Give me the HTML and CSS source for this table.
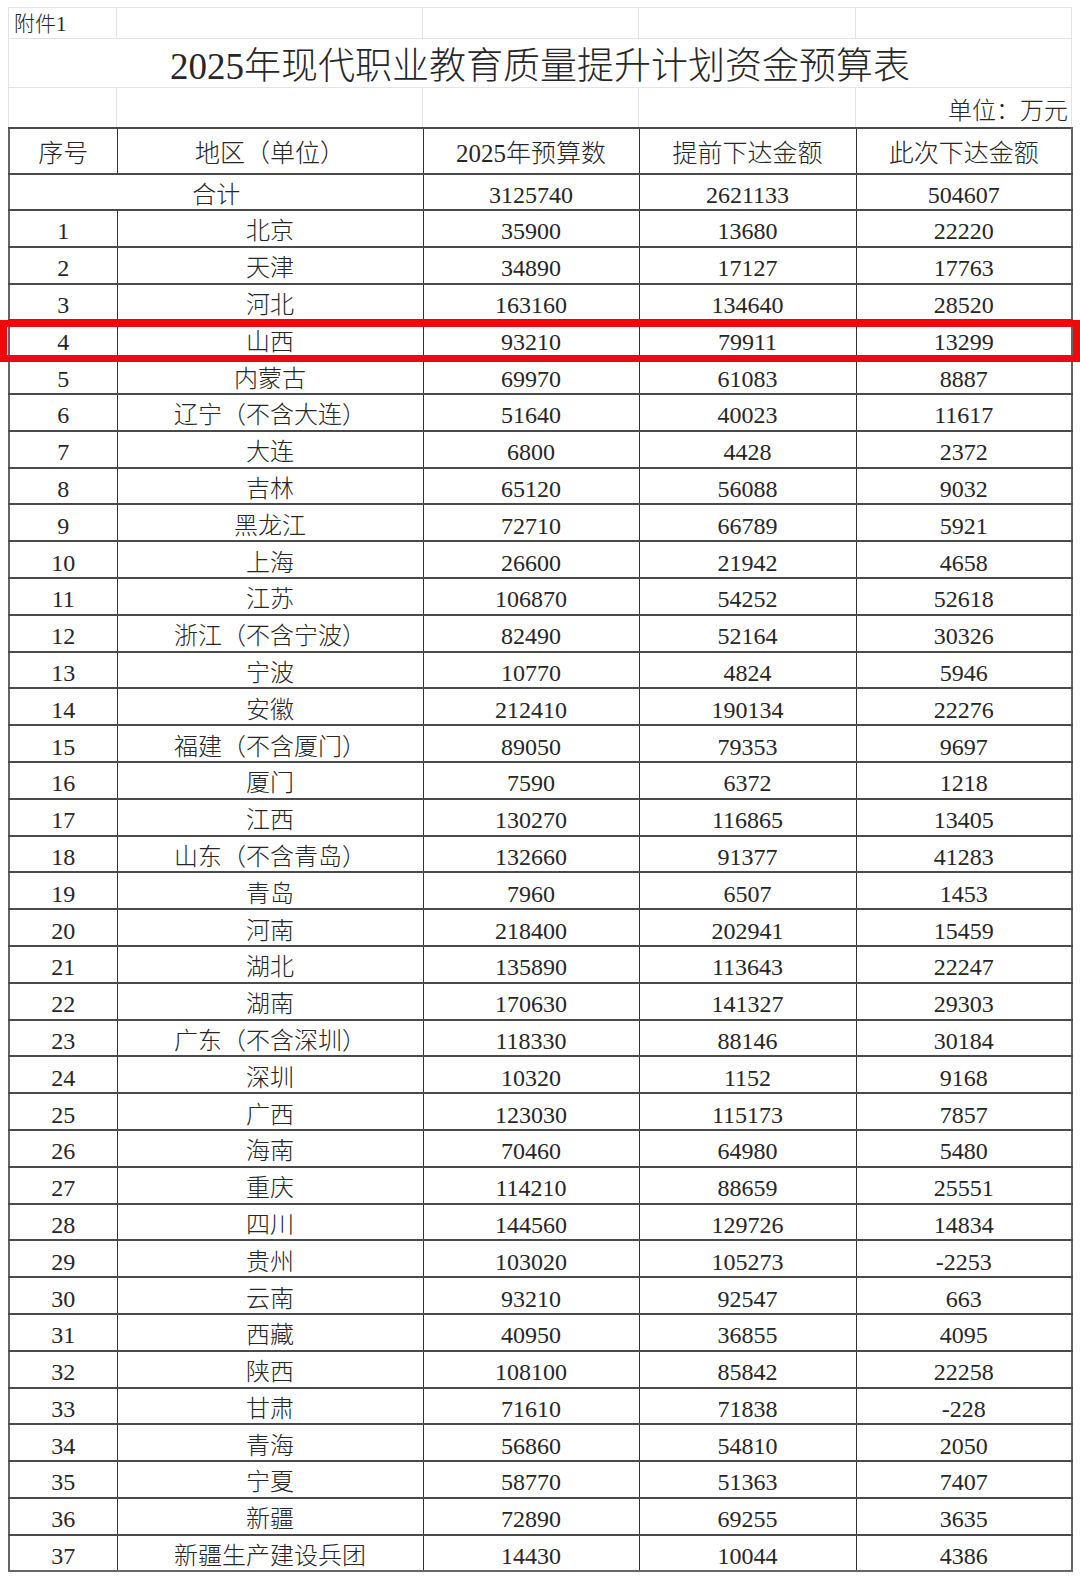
FILE: index.html
```html
<!DOCTYPE html>
<html lang="zh-CN">
<head>
<meta charset="utf-8">
<title>2025年现代职业教育质量提升计划资金预算表</title>
<link rel="stylesheet" href="styles.css">
</head>
<body>
<div class="page">
  <table class="sheet-head">
    <colgroup><col class="c1"><col class="c2"><col class="c3"><col class="c4"><col class="c5"></colgroup>
    <tr class="r-annex"><td class="annex">附件<span class="num">1</span></td><td></td><td></td><td></td><td></td></tr>
    <tr class="r-title"><td colspan="5" class="title"><span class="num">2025</span>年现代职业教育质量提升计划资金预算表</td></tr>
    <tr class="r-unit"><td></td><td></td><td></td><td></td><td class="unit">单位：万元</td></tr>
  </table>
  <table class="budget">
    <colgroup><col class="c1"><col class="c2"><col class="c3"><col class="c4"><col class="c5"></colgroup>
    <thead>
      <tr class="r-head"><th>序号</th><th>地区（单位）</th><th><span class="num">2025</span>年预算数</th><th>提前下达金额</th><th>此次下达金额</th></tr>
    </thead>
    <tbody>
      <tr class="r-total"><td colspan="2">合计</td><td>3125740</td><td>2621133</td><td>504607</td></tr>
      <tr><td>1</td><td>北京</td><td>35900</td><td>13680</td><td>22220</td></tr>
      <tr><td>2</td><td>天津</td><td>34890</td><td>17127</td><td>17763</td></tr>
      <tr><td>3</td><td>河北</td><td>163160</td><td>134640</td><td>28520</td></tr>
      <tr><td>4</td><td>山西</td><td>93210</td><td>79911</td><td>13299</td></tr>
      <tr><td>5</td><td>内蒙古</td><td>69970</td><td>61083</td><td>8887</td></tr>
      <tr><td>6</td><td>辽宁（不含大连）</td><td>51640</td><td>40023</td><td>11617</td></tr>
      <tr><td>7</td><td>大连</td><td>6800</td><td>4428</td><td>2372</td></tr>
      <tr><td>8</td><td>吉林</td><td>65120</td><td>56088</td><td>9032</td></tr>
      <tr><td>9</td><td>黑龙江</td><td>72710</td><td>66789</td><td>5921</td></tr>
      <tr><td>10</td><td>上海</td><td>26600</td><td>21942</td><td>4658</td></tr>
      <tr><td>11</td><td>江苏</td><td>106870</td><td>54252</td><td>52618</td></tr>
      <tr><td>12</td><td>浙江（不含宁波）</td><td>82490</td><td>52164</td><td>30326</td></tr>
      <tr><td>13</td><td>宁波</td><td>10770</td><td>4824</td><td>5946</td></tr>
      <tr><td>14</td><td>安徽</td><td>212410</td><td>190134</td><td>22276</td></tr>
      <tr><td>15</td><td>福建（不含厦门）</td><td>89050</td><td>79353</td><td>9697</td></tr>
      <tr><td>16</td><td>厦门</td><td>7590</td><td>6372</td><td>1218</td></tr>
      <tr><td>17</td><td>江西</td><td>130270</td><td>116865</td><td>13405</td></tr>
      <tr><td>18</td><td>山东（不含青岛）</td><td>132660</td><td>91377</td><td>41283</td></tr>
      <tr><td>19</td><td>青岛</td><td>7960</td><td>6507</td><td>1453</td></tr>
      <tr><td>20</td><td>河南</td><td>218400</td><td>202941</td><td>15459</td></tr>
      <tr><td>21</td><td>湖北</td><td>135890</td><td>113643</td><td>22247</td></tr>
      <tr><td>22</td><td>湖南</td><td>170630</td><td>141327</td><td>29303</td></tr>
      <tr><td>23</td><td>广东（不含深圳）</td><td>118330</td><td>88146</td><td>30184</td></tr>
      <tr><td>24</td><td>深圳</td><td>10320</td><td>1152</td><td>9168</td></tr>
      <tr><td>25</td><td>广西</td><td>123030</td><td>115173</td><td>7857</td></tr>
      <tr><td>26</td><td>海南</td><td>70460</td><td>64980</td><td>5480</td></tr>
      <tr><td>27</td><td>重庆</td><td>114210</td><td>88659</td><td>25551</td></tr>
      <tr><td>28</td><td>四川</td><td>144560</td><td>129726</td><td>14834</td></tr>
      <tr><td>29</td><td>贵州</td><td>103020</td><td>105273</td><td>-2253</td></tr>
      <tr><td>30</td><td>云南</td><td>93210</td><td>92547</td><td>663</td></tr>
      <tr><td>31</td><td>西藏</td><td>40950</td><td>36855</td><td>4095</td></tr>
      <tr><td>32</td><td>陕西</td><td>108100</td><td>85842</td><td>22258</td></tr>
      <tr><td>33</td><td>甘肃</td><td>71610</td><td>71838</td><td>-228</td></tr>
      <tr><td>34</td><td>青海</td><td>56860</td><td>54810</td><td>2050</td></tr>
      <tr><td>35</td><td>宁夏</td><td>58770</td><td>51363</td><td>7407</td></tr>
      <tr><td>36</td><td>新疆</td><td>72890</td><td>69255</td><td>3635</td></tr>
      <tr><td>37</td><td>新疆生产建设兵团</td><td>14430</td><td>10044</td><td>4386</td></tr>
    </tbody>
  </table>
  <div class="highlight"></div>
</div>
</body>
</html>
```

FILE: styles.css
```css
html, body {
  margin: 0;
  padding: 0;
  background: #ffffff;
}

body {
  font-family: "Liberation Serif", "Noto Sans CJK SC", serif;
  font-weight: 300;
  color: #262626;
}

.num {
  font-family: "Liberation Serif", serif;
}

.page {
  position: relative;
  width: 1080px;
  height: 1580px;
  padding: 7px 0 0 8px;
  box-sizing: border-box;
}

table {
  border-collapse: collapse;
  table-layout: fixed;
  width: 1063px;
}

col.c1 { width: 108px; }
col.c2 { width: 306px; }
col.c3 { width: 216px; }
col.c4 { width: 217px; }
col.c5 { width: 216px; }

/* light spreadsheet gridlines above the table */
.sheet-head td {
  border: 1px solid #e4e4e4;
  border-bottom: none;
  padding: 0;
  line-height: 24px;
}

.r-annex td { height: 30px; }
.r-title td { height: 41px; }
.r-unit td { height: 36px; }

.annex {
  font-size: 21px;
  padding-left: 5px !important;
  padding-top: 2px !important;
  vertical-align: middle;
  white-space: nowrap;
}

.r-annex td.annex { height: 28px; }

.title {
  font-size: 37px;
  line-height: 40px !important;
  text-align: center;
  vertical-align: middle;
  padding-top: 7px !important;
  white-space: nowrap;
}

.unit {
  font-size: 24px;
  text-align: right;
  vertical-align: bottom;
  padding: 0 3px 4px 0 !important;
  white-space: nowrap;
}

.r-unit td.unit { height: 35px; }

/* main table */
.budget th,
.budget td {
  border-left: 1px solid #333;
  border-right: 1px solid #333;
  border-top: 2px solid #4a4a4a;
  border-bottom: 2px solid #4a4a4a;
  padding: 6px 0 0 0;
  text-align: center;
  vertical-align: middle;
  font-weight: 300;
  white-space: nowrap;
  line-height: 24px;
}

.budget td {
  font-size: 24px;
  height: 28.8px;
}

.budget th {
  font-size: 25px;
  height: 38px;
}

.budget tr > :first-child { border-left: 2px solid #666; }
.budget tr > :last-child { border-right: 2px solid #666; }
.budget tbody tr:last-child td { border-bottom: 2px solid #666; }

.budget .r-total td { height: 28px; }

.highlight {
  position: absolute;
  left: 0;
  top: 320px;
  width: 1080px;
  height: 42px;
  box-sizing: border-box;
  border: 7px solid #ee0a0a;
  pointer-events: none;
}
```
